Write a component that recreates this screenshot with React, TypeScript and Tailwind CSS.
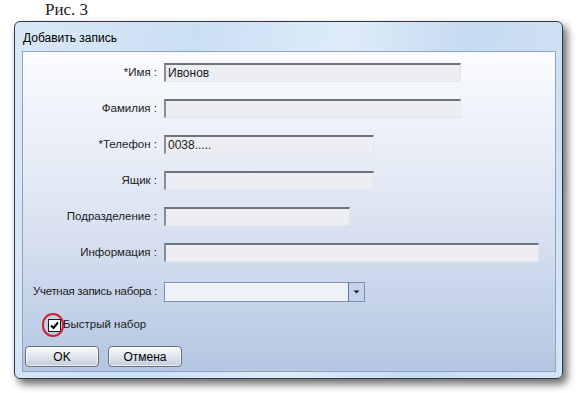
import React from "react";

const font = { fontFamily: '"Liberation Sans", "DejaVu Sans", sans-serif' };

function Field({ label, width, value }: { label: string; width: number; value?: string }) {
  return (
    <div className="flex items-center h-[19px]">
      <div className="w-[134px] text-right text-[11.5px] text-[#1b1b1b] whitespace-nowrap">{label}</div>
      <div
        className="ml-[7px] h-[19px] border-t-2 border-l-2 border-r border-b border-t-[#707378] border-l-[#8a8d92] border-r-[#e2e7ee] border-b-[#e2e7ee] bg-[#eceef4] flex items-center pl-[2px] text-[12px] text-[#1b1b1b]"
        style={{ width }}
      >
        {value}
      </div>
    </div>
  );
}

export default function App() {
  return (
    <div className="w-[581px] h-[393px] bg-white overflow-hidden" style={font}>
      <div
        className="pl-[45px] h-[21px] text-[17px] leading-[19px] text-[#222]"
        style={{ fontFamily: '"Liberation Serif", serif' }}
      >
        Рис. 3
      </div>
      <div
        className="ml-[14px] w-[549px] h-[358px] rounded-[6px] border border-[#2f3a48] flex flex-col pl-[7px] pr-[6px] pb-[6px] shadow-[4px_5px_8px_rgba(0,0,0,0.6)]"
        style={{
          background:
            "linear-gradient(100deg, #d9e8f7 0%, #cbdff3 30%, #deecf9 55%, #c6daf0 75%, #d4e5f5 100%)",
        }}
      >
        <div className="h-[29px] flex items-center pl-[1px] pt-[2px] text-[12px] text-black">Добавить запись</div>
        <div className="flex-1 border border-[#8fa3bd] bg-gradient-to-b from-[#fbfcfe] via-[#dde5f2] to-[#b4c6e2] flex flex-col pt-[11px] relative">
          <div className="flex flex-col gap-[17px]">
            <Field label="*Имя :" width={297} value="Ивонов" />
            <Field label="Фамилия :" width={297} />
            <Field label="*Телефон :" width={210} value="0038....." />
            <Field label="Ящик :" width={210} />
            <Field label="Подразделение :" width={186} />
            <Field label="Информация :" width={375} />
          </div>
          <div className="flex items-center h-[20px] mt-[20px]">
            <div className="w-[134px] text-right text-[11.5px] tracking-[-0.3px] text-[#1b1b1b] whitespace-nowrap">Учетная запись набора :</div>
            <div className="ml-[7px] w-[201px] h-[20px] border border-[#7d8fb3] bg-[#eef1f8] flex">
              <div className="flex-1" />
              <div className="w-[16px] h-full border-l border-[#5d72a0] bg-[#c6d2ea] flex items-center justify-center">
                <svg width="7" height="4" viewBox="0 0 7 4">
                  <path d="M0.5 0.5 H6.5 L3.5 3.5 Z" fill="#111" />
                </svg>
              </div>
            </div>
          </div>
          <div className="flex items-center h-[20px] mt-[13px] pl-[25px] relative">
            <div className="w-[13px] h-[13px] border border-[#1c1c1c] bg-white flex items-center justify-center">
              <svg width="9" height="9" viewBox="0 0 9 9">
                <path d="M1 4.5 L3.5 7 L8 1.5" stroke="#000" strokeWidth="2" fill="none" />
              </svg>
            </div>
            <span className="ml-[2px] text-[11.5px] text-[#1b1b1b]">Быстрый набор</span>
            <div className="absolute left-[19px] top-[-2px] w-[22px] h-[24px] rounded-full border-2 border-[#d3202e]" />
          </div>
          <div className="flex gap-[9px] mt-[11px] pl-[2px]">
            <button className="w-[74px] h-[21px] rounded-[4px] border border-[#6b6f76] bg-gradient-to-b from-[#f7f9fb] via-[#e1e6ee] to-[#c3ccdb] text-[12px] text-black shadow-[inset_0_0_0_1px_rgba(255,255,255,0.7)]">
              OK
            </button>
            <button className="w-[74px] h-[21px] rounded-[4px] border border-[#6b6f76] bg-gradient-to-b from-[#f7f9fb] via-[#e1e6ee] to-[#c3ccdb] text-[12px] text-black shadow-[inset_0_0_0_1px_rgba(255,255,255,0.7)]">
              Отмена
            </button>
          </div>
        </div>
      </div>
    </div>
  );
}
